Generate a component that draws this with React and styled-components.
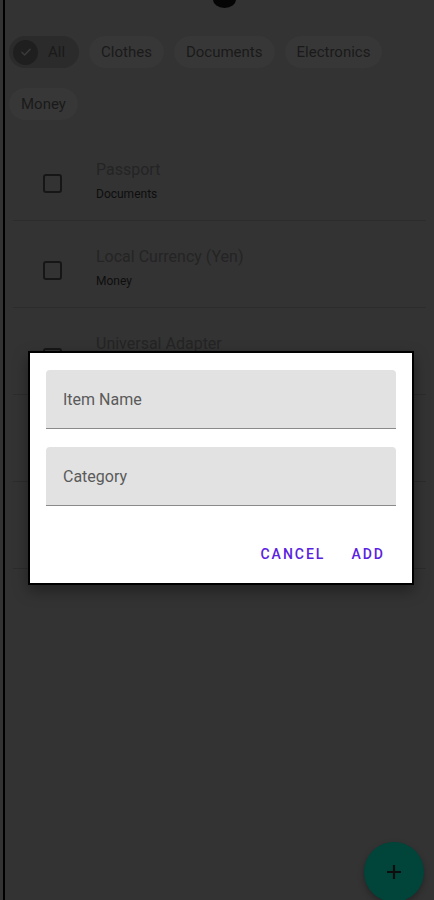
import styled, { createGlobalStyle } from 'styled-components';

const GlobalStyle = createGlobalStyle`
  html, body {
    margin: 0;
    padding: 0;
    background: #333333;
  }
  * { box-sizing: border-box; }
`;

const Screen = styled.div`
  position: relative;
  height: 900px;
  margin-left: 3px;
  border-left: 2px solid #000;
  background: #333333;
  overflow: hidden;
  font-family: Roboto, "Noto Sans", sans-serif;
`;

const Notch = styled.div`
  position: absolute;
  top: -9px;
  left: 208px;
  width: 23px;
  height: 17px;
  border-radius: 50%;
  background: #050505;
`;

const ChipBar = styled.div`
  display: flex;
  flex-wrap: wrap;
  gap: 20px 10px;
  padding: 36px 8px 0 4px;
`;

const Chip = styled.div`
  display: flex;
  align-items: center;
  gap: 10px;
  height: 32px;
  padding: ${p => (p.$selected ? '0 14px 0 0' : '0 12px')};
  border-radius: 16px;
  background: ${p => (p.$selected ? '#2b2b2b' : '#373737')};
  color: #1a1a1a;
  font-size: 15px;
`;

const CheckDot = styled.span`
  display: flex;
  align-items: center;
  justify-content: center;
  width: 25px;
  height: 25px;
  margin-left: 4px;
  border-radius: 50%;
  background: #1f1f1f;
`;

const List = styled.div`
  margin-top: 14px;
  padding: 0 8px;
`;

const Item = styled.div`
  display: flex;
  align-items: flex-start;
  height: 87px;
  padding: 24px 0 0 30px;
  border-bottom: 1px solid #2c2c2c;
`;

const Box = styled.span`
  width: 19px;
  height: 19px;
  margin-top: 16px;
  border: 2px solid #161616;
  border-radius: 3px;
  flex-shrink: 0;
`;

const Texts = styled.div`
  display: flex;
  flex-direction: column;
  margin-left: 34px;
`;

const Title = styled.div`
  font-size: 16px;
  line-height: 24px;
  color: #242424;
`;

const Sub = styled.div`
  font-size: 12px;
  line-height: 24px;
  color: #0e0e0e;
`;

const Dialog = styled.div`
  position: absolute;
  top: 351px;
  left: 23px;
  width: 386px;
  border: 2px solid #000;
  background: #fff;
  box-shadow: 0 6px 14px rgba(0, 0, 0, 0.35);
  padding: 17px 16px 11px 16px;
`;

const Field = styled.div`
  display: flex;
  align-items: center;
  height: 59px;
  padding: 0 17px;
  background: #e2e2e2;
  border-radius: 4px 4px 0 0;
  border-bottom: 1px solid #8a8a8a;
  color: #5a5a5a;
  font-size: 16px;
  & + & {
    margin-top: 18px;
  }
`;

const Actions = styled.div`
  display: flex;
  justify-content: flex-end;
  gap: 10px;
  margin-top: 30px;
  padding-right: 3px;
`;

const TextButton = styled.button`
  height: 36px;
  padding: 0 8px;
  border: none;
  background: transparent;
  color: #5a22e0;
  font-family: Roboto, "Noto Sans", sans-serif;
  font-size: 14px;
  font-weight: 500;
  letter-spacing: 2px;
  text-transform: uppercase;
`;

const Fab = styled.div`
  position: absolute;
  left: 359px;
  top: 842px;
  width: 60px;
  height: 60px;
  border-radius: 50%;
  background: #00443a;
  display: flex;
  align-items: center;
  justify-content: center;
  box-shadow: 0 3px 6px rgba(0, 0, 0, 0.3);
`;

const chips = ['Clothes', 'Documents', 'Electronics', 'Money'];

const items = [
  { name: 'Passport', cat: 'Documents' },
  { name: 'Local Currency (Yen)', cat: 'Money' },
  { name: 'Universal Adapter', cat: 'Electronics' },
  { name: 'Jacket', cat: 'Clothes' },
  { name: 'Phone Charger', cat: 'Electronics' },
];

export default function App() {
  return (
    <>
      <GlobalStyle />
      <Screen>
        <Notch />
        <ChipBar>
          <Chip $selected>
            <CheckDot>
              <svg width="14" height="14" viewBox="0 0 24 24" fill="none" stroke="#3a3a3a" strokeWidth="2.5" strokeLinecap="round" strokeLinejoin="round">
                <path d="M5 12.5l4.5 4.5L19 7.5" />
              </svg>
            </CheckDot>
            All
          </Chip>
          {chips.map(c => (
            <Chip key={c}>{c}</Chip>
          ))}
        </ChipBar>
        <List>
          {items.map(it => (
            <Item key={it.name}>
              <Box />
              <Texts>
                <Title>{it.name}</Title>
                <Sub>{it.cat}</Sub>
              </Texts>
            </Item>
          ))}
        </List>
        <Dialog>
          <Field>Item Name</Field>
          <Field>Category</Field>
          <Actions>
            <TextButton>Cancel</TextButton>
            <TextButton>Add</TextButton>
          </Actions>
        </Dialog>
        <Fab>
          <svg width="14" height="14" viewBox="0 0 14 14" stroke="#0d0d0d" strokeWidth="2.2">
            <path d="M7 0v14M0 7h14" />
          </svg>
        </Fab>
      </Screen>
    </>
  );
}
